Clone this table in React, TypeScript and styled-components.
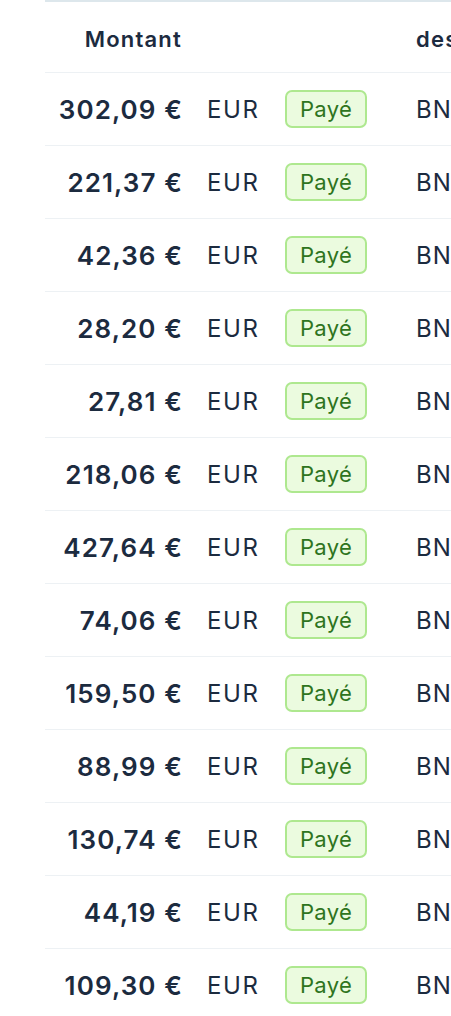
import React from 'react';
import styled, { createGlobalStyle } from 'styled-components';

const GlobalStyle = createGlobalStyle`
  html, body {
    margin: 0;
    padding: 0;
    background: #ffffff;
    font-family: Inter, 'Noto Sans', sans-serif;
    color: #1c2b3f;
  }
`;

const rows = [
  '302,09',
  '221,37',
  '42,36',
  '28,20',
  '27,81',
  '218,06',
  '427,64',
  '74,06',
  '159,50',
  '88,99',
  '130,74',
  '44,19',
  '109,30'
];

const Table = styled.div`
  margin-left: 45px;
  width: 406px;
  height: 1016px;
  overflow: hidden;
  border-top: 2px solid #dde7ec;
  box-sizing: border-box;
`;

const Row = styled.div<{ head?: boolean }>`
  display: grid;
  grid-template-columns: 137px 103px 131px 300px;
  align-items: center;
  height: ${(p) => (p.head ? '70px' : '72px')};
  border-bottom: 1px solid #edf1f4;
  white-space: nowrap;
`;

const HeadCell = styled.div<{ right?: boolean }>`
  font-size: 22px;
  font-weight: 600;
  letter-spacing: 1.2px;
  text-align: ${(p) => (p.right ? 'right' : 'left')};
  padding-top: 3px;
`;

const Amount = styled.div`
  font-size: 26px;
  font-weight: 600;
  text-align: right;
  letter-spacing: 1.1px;
  margin-right: -1px;
`;

const Currency = styled.div`
  font-size: 24px;
  font-weight: 400;
  letter-spacing: 1.6px;
  padding-left: 25px;
`;

const Badge = styled.span`
  display: inline-flex;
  align-items: center;
  justify-content: center;
  box-sizing: border-box;
  width: 82px;
  height: 38px;
  border: 2px solid #aee88f;
  border-radius: 7px;
  background: #ebfbdf;
  color: #2e7420;
  font-size: 22px;
  font-weight: 400;
  letter-spacing: 0.3px;
`;

const Label = styled.div`
  font-size: 24px;
  font-weight: 400;
  letter-spacing: 1px;
`;

export default function App() {
  return (
    <>
      <GlobalStyle />
      <Table>
        <Row head>
          <HeadCell right>Montant</HeadCell>
          <HeadCell />
          <HeadCell />
          <HeadCell>description</HeadCell>
        </Row>
        {rows.map((amount, i) => (
          <Row key={i}>
            <Amount>{amount} €</Amount>
            <Currency>EUR</Currency>
            <div>
              <Badge>Payé</Badge>
            </div>
            <Label>BNP PARIBAS</Label>
          </Row>
        ))}
      </Table>
    </>
  );
}
